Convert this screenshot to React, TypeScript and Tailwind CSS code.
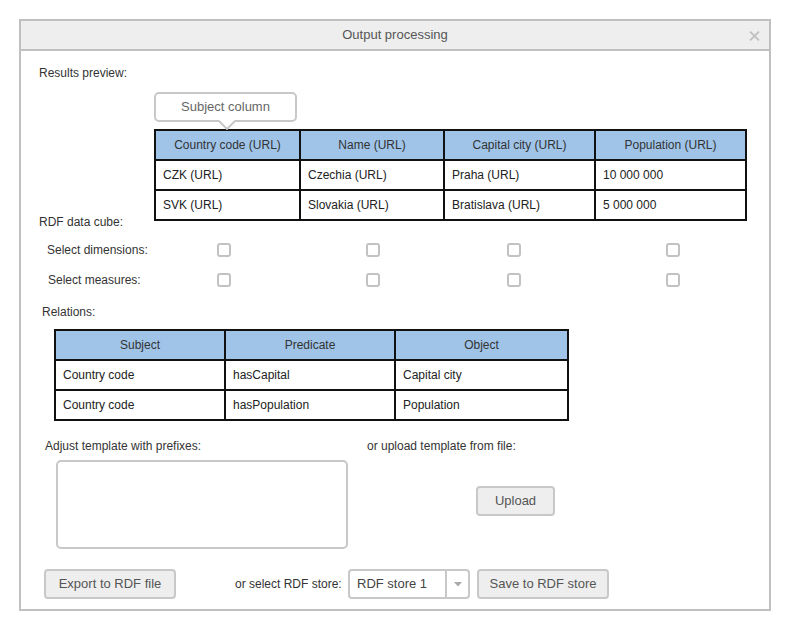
import React from "react";

const previewHead = ["Country code (URL)", "Name (URL)", "Capital city (URL)", "Population (URL)"];
const previewRows = [
  ["CZK (URL)", "Czechia (URL)", "Praha (URL)", "10 000 000"],
  ["SVK (URL)", "Slovakia (URL)", "Bratislava (URL)", "5 000 000"],
];

const relHead = ["Subject", "Predicate", "Object"];
const relRows = [
  ["Country code", "hasCapital", "Capital city"],
  ["Country code", "hasPopulation", "Population"],
];

function Checkbox() {
  return <div className="h-[14px] w-[14px] rounded-[3px] border-2 border-[#c2c2c2] bg-white" />;
}

function Grid({ cols, head, rows }: { cols: string; head: string[]; rows: string[][] }) {
  return (
    <div className={`grid ${cols} gap-[2px] bg-[#111] p-[2px]`}>
      {head.map((h) => (
        <div key={h} className="flex h-[28px] items-center justify-center bg-[#9fc4e8] text-[#333]">
          {h}
        </div>
      ))}
      {rows.map((r, i) =>
        r.map((c, j) => (
          <div key={`${i}-${j}`} className="flex h-[28px] items-center bg-white pl-[7px] text-[#222]">
            {c}
          </div>
        ))
      )}
    </div>
  );
}

function Button({ label, className }: { label: string; className?: string }) {
  return (
    <div
      className={`flex h-[30px] items-center justify-center rounded-[4px] border-2 border-[#c8c8c8] bg-[#eeeeee] text-[13px] text-[#555] ${className ?? ""}`}
    >
      {label}
    </div>
  );
}

export default function App() {
  return (
    <div className="h-[630px] w-[790px] bg-white pl-[19px] pt-[19px] font-['Liberation_Sans',Arial,sans-serif] text-[12px] leading-[14px] text-[#333]">
      <div className="flex h-[592px] w-[752px] flex-col border-2 border-[#c0c0c0]">
        {/* title bar */}
        <div className="relative flex h-[30px] shrink-0 items-center justify-center border-b-2 border-[#c0c0c0] bg-[#eeeeee] text-[13px] text-[#555]">
          Output processing
          <svg className="absolute right-[9px] top-[10px]" width="11" height="10" viewBox="0 0 11 10">
            <path d="M1 0.5 L10 9.5 M10 0.5 L1 9.5" stroke="#c2c2c2" strokeWidth="1.8" />
          </svg>
        </div>

        <div className="flex flex-col">
          <div className="mt-[15px] pl-[18px]">Results preview:</div>

          <div className="relative ml-[133px] mt-[12px] flex h-[30px] w-[143px] items-center justify-center rounded-[5px] border-2 border-[#c8c8c8] text-[13px] text-[#666]">
            Subject column
            <svg className="absolute left-[63px] top-[26px]" width="16" height="10" viewBox="0 0 16 10">
              <path d="M0 0 L16 0 L8 8 Z" fill="#fff" />
              <path d="M0 1 L8 9 L16 1" fill="none" stroke="#c8c8c8" strokeWidth="2" />
            </svg>
          </div>

          <div className="ml-[133px] mt-[7px] w-fit">
            <Grid cols="grid-cols-[143px_142px_149px_149px]" head={previewHead} rows={previewRows} />
          </div>

          <div className="mt-[-6px] pl-[18px]">RDF data cube:</div>

          <div className="mt-[6px] flex h-[30px] items-center pl-[26px]">
            <div className="w-[170px]">Select dimensions:</div>
            <Checkbox />
            <div className="ml-[135px]"><Checkbox /></div>
            <div className="ml-[127px]"><Checkbox /></div>
            <div className="ml-[145px]"><Checkbox /></div>
          </div>
          <div className="flex h-[30px] items-center pl-[27px]">
            <div className="w-[169px]">Select measures:</div>
            <Checkbox />
            <div className="ml-[135px]"><Checkbox /></div>
            <div className="ml-[127px]"><Checkbox /></div>
            <div className="ml-[145px]"><Checkbox /></div>
          </div>

          <div className="mt-[10px] pl-[21px]">Relations:</div>
          <div className="ml-[33px] mt-[10px] w-fit">
            <Grid cols="grid-cols-[168px_168px_171px]" head={relHead} rows={relRows} />
          </div>

          <div className="mt-[18px] flex">
            <div className="w-[346px] pl-[24px]">
              <div>Adjust template with prefixes:</div>
              <div className="ml-[11px] mt-[7px] h-[89px] w-[292px] rounded-[5px] border-2 border-[#c8c8c8]" />
            </div>
            <div>
              <div>or upload template from file:</div>
              <Button label="Upload" className="ml-[109px] mt-[33px] w-[79px]" />
            </div>
          </div>

          <div className="mt-[20px] flex items-center pl-[23px]">
            <Button label="Export to RDF file" className="w-[132px]" />
            <div className="ml-[59px] w-[113px]">or select RDF store:</div>
            <div className="flex h-[30px] w-[122px] items-stretch rounded-[4px] border-2 border-[#c8c8c8] bg-white text-[13px] text-[#444]">
              <div className="flex flex-1 items-center pl-[7px]">RDF store 1</div>
              <div className="flex w-[23px] items-center justify-center border-l-2 border-[#c8c8c8]">
                <svg width="8" height="5" viewBox="0 0 8 5">
                  <path d="M0 0 L8 0 L4 4.5 Z" fill="#aaa" />
                </svg>
              </div>
            </div>
            <Button label="Save to RDF store" className="ml-[7px] w-[132px]" />
          </div>
        </div>
      </div>
    </div>
  );
}
